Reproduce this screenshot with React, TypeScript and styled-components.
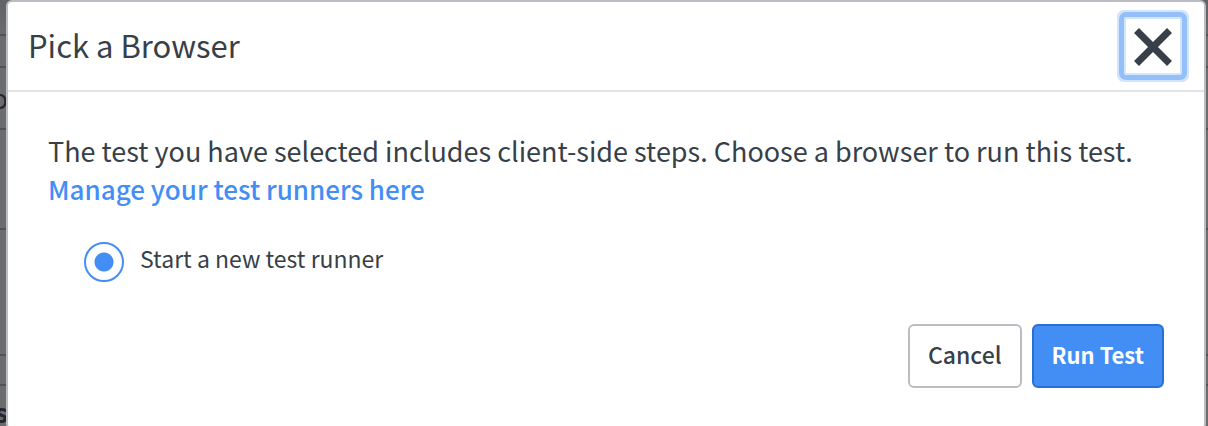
import React from 'react';
import styled, { createGlobalStyle } from 'styled-components';

const GlobalStyle = createGlobalStyle`
  *, *::before, *::after { box-sizing: border-box; }
  body {
    margin: 0;
    overflow: hidden;
    color: #373f49;
    font-family: "Noto Sans CJK SC", "Noto Sans", sans-serif;
  }
`;

const Screen = styled.div`
  display: grid;
  height: 100vh;
  overflow: hidden;
  & > * { grid-area: 1 / 1; min-width: 0; }
`;

const Backdrop = styled.div`
  display: flex;
  flex-direction: column;
  background: linear-gradient(#606265, #6b6c6e 40px, #6b6c6e);
`;

const BackdropRow = styled.div<{ $height: number }>`
  display: flex;
  flex: none;
  align-items: center;
  height: ${(p) => p.$height}px;
  border-bottom: 2px solid #515254;
`;

const BackdropText = styled.span<{ $bold?: boolean }>`
  display: flex;
  justify-content: flex-end;
  width: 8px;
  color: #24262b;
  font-size: 27px;
  font-weight: ${(p) => (p.$bold ? 700 : 400)};
  line-height: 32px;
`;

const Stage = styled.div`
  z-index: 1;
  padding: 0 2px 0 6px;
`;

const Dialog = styled.section`
  background: #fff;
  border: 2px solid #bcbdc2;
  border-radius: 6px;
`;

const Header = styled.header`
  display: flex;
  align-items: center;
  justify-content: space-between;
  height: 90px;
  padding: 0 22px 0 20px;
  border-bottom: 2px solid #e3e4e5;
`;

const Title = styled.h1`
  margin: 0;
  padding-bottom: 2px;
  font-size: 31px;
  font-weight: 400;
  line-height: 40px;
`;

const CloseButton = styled.button`
  display: grid;
  place-items: center;
  width: 58px;
  height: 58px;
  padding: 0;
  color: #373f49;
  background: #fff;
  border: 2px solid #d3e5fd;
  outline: 5px solid #94c0fa;
  border-radius: 2px;
  box-shadow: 0 0 0 7px #d3e5fd;
`;

const Body = styled.div`
  padding: 40px;
`;

const Message = styled.p`
  margin: 0;
  font-size: 27px;
  line-height: 38px;
`;

const RunnerLink = styled.a`
  color: #438ef5;
  font-size: 26px;
  font-weight: 500;
  text-decoration: none;
`;

const Option = styled.label`
  display: flex;
  align-items: center;
  gap: 16px;
  margin: 34px 0 42px 36px;
  font-size: 23px;
  line-height: 32px;
`;

const OptionText = styled.span`
  padding-bottom: 8px;
`;

const Radio = styled.input`
  appearance: none;
  flex: none;
  width: 40px;
  height: 40px;
  margin: 0;
  border: 2px solid #438ef5;
  border-radius: 50%;
  background: #fff;
  &:checked { background: radial-gradient(circle, #438ef5 9px, #fff 10px); }
`;

const Actions = styled.footer`
  display: flex;
  justify-content: flex-end;
  gap: 10px;
`;

const Button = styled.button<{ $primary?: boolean }>`
  height: 64px;
  padding: 0 18px 4px;
  color: ${(p) => (p.$primary ? '#fff' : '#373f49')};
  background: ${(p) => (p.$primary ? '#438ef5' : '#fff')};
  border: 2px solid ${(p) => (p.$primary ? '#286fd2' : '#bcbdc2')};
  border-radius: 6px;
  font-family: inherit;
  font-size: ${(p) => (p.$primary ? 22 : 23)}px;
  font-weight: ${(p) => (p.$primary ? 700 : 500)};
  line-height: 32px;
`;

const rows = [
  { height: 36, text: '' },
  { height: 32, text: '' },
  { height: 62, text: 'o' },
  { height: 100, text: '' },
  { height: 126, text: '' },
  { height: 30, text: '' },
  { height: 54, text: 's', bold: true },
];

export default function App() {
  return (
    <>
      <GlobalStyle />
      <Screen>
        <Backdrop aria-hidden="true">
          {rows.map((row, i) => (
            <BackdropRow key={i} $height={row.height}>
              {row.text && <BackdropText $bold={row.bold}>{row.text}</BackdropText>}
            </BackdropRow>
          ))}
        </Backdrop>
        <Stage>
          <Dialog role="dialog" aria-modal="true" aria-labelledby="dialog-title">
            <Header>
              <Title id="dialog-title">Pick a Browser</Title>
              <CloseButton type="button" aria-label="Close">
                <svg width="40" height="40" viewBox="0 0 40 40" fill="none" stroke="currentColor" strokeWidth="7">
                  <path d="M3.5 4.5 36.5 37.5M36.5 4.5 3.5 37.5" />
                </svg>
              </CloseButton>
            </Header>
            <Body>
              <Message>
                The test you have selected includes client-side steps. Choose a browser to run this test.{' '}
                <RunnerLink href="#runners">Manage your test runners here</RunnerLink>
              </Message>
              <Option>
                <Radio type="radio" name="runner" value="new" defaultChecked />
                <OptionText>Start a new test runner</OptionText>
              </Option>
              <Actions>
                <Button type="button">Cancel</Button>
                <Button type="button" $primary>Run Test</Button>
              </Actions>
            </Body>
          </Dialog>
        </Stage>
      </Screen>
    </>
  );
}
